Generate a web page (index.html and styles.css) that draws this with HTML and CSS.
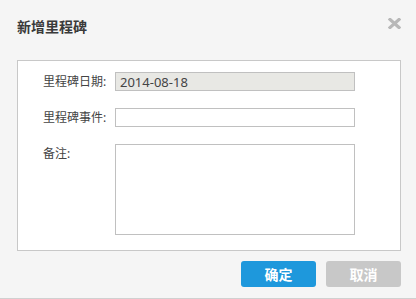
FILE: index.html
```html
<!DOCTYPE html>
<html lang="zh-CN">
<head>
    <meta charset="UTF-8">
    <meta name="viewport" content="width=device-width, initial-scale=1.0">
    <title>新增里程碑</title>
    <link rel="stylesheet" href="styles.css">
</head>
<body>
    <div class="dialog">
        <div class="dialog-header">
            <h2 class="dialog-title">新增里程碑</h2>
            <span class="dialog-close" title="关闭">
                <svg width="13" height="11" viewBox="0 0 13 11">
                    <path d="M2 1.5 L11 9.5 M11 1.5 L2 9.5" stroke="#b8b8b8" stroke-width="3.2" stroke-linecap="square"/>
                </svg>
            </span>
        </div>
        <div class="panel">
            <div class="form-row">
                <label class="form-label" for="msDate">里程碑日期:</label>
                <input class="form-input readonly" type="text" id="msDate" value="2014-08-18" readonly>
            </div>
            <div class="form-row">
                <label class="form-label" for="msEvent">里程碑事件:</label>
                <input class="form-input" type="text" id="msEvent">
            </div>
            <div class="form-row">
                <label class="form-label" for="msNote">备注:</label>
                <textarea class="form-textarea" id="msNote"></textarea>
            </div>
        </div>
        <div class="dialog-footer">
            <button class="btn btn-primary">确定</button>
            <button class="btn btn-cancel">取消</button>
        </div>
    </div>
</body>
</html>
```

FILE: styles.css
```css
body {
    margin: 0;
    font-family: "Noto Sans", "Noto Sans CJK SC", sans-serif;
    background-color: #f5f5f5;
}
.dialog {
    height: 298px;
    border-bottom: 1px solid #d0d0d0;
    padding: 0 15px 0 17px;
    box-sizing: content-box;
    width: 384px;
}
.dialog-header {
    display: flex;
    justify-content: space-between;
    align-items: center;
    height: 60px;
}
.dialog-title {
    margin: 0;
    font-size: 14px;
    font-weight: bold;
    color: #3a3a3a;
    line-height: 20px;
    padding-bottom: 7px;
}
.dialog-close {
    display: flex;
    padding-bottom: 14px;
    cursor: pointer;
}
.panel {
    background-color: #fff;
    border: 1px solid #c8c8c8;
    padding: 11px 0 15px 25px;
    display: flex;
    flex-direction: column;
    gap: 17px;
}
.form-row {
    display: flex;
    align-items: flex-start;
}
.form-label {
    width: 72px;
    font-size: 12px;
    color: #444;
    line-height: 19px;
    flex-shrink: 0;
}
.form-input {
    width: 240px;
    height: 19px;
    box-sizing: border-box;
    border: 1px solid #c0c0c0;
    padding: 0 4px;
    font-family: inherit;
    font-size: 13px;
    color: #444;
    margin: 0;
    outline: none;
}
.form-input.readonly {
    background-color: #e8e8e4;
}
.form-textarea {
    width: 240px;
    height: 91px;
    box-sizing: border-box;
    border: 1px solid #c0c0c0;
    margin: 0;
    resize: none;
    outline: none;
    font-family: inherit;
}
.dialog-footer {
    display: flex;
    justify-content: flex-end;
    gap: 10px;
    margin-top: 10px;
}
.btn {
    width: 75px;
    height: 26px;
    border: none;
    border-radius: 3px;
    color: #fff;
    font-family: inherit;
    font-size: 14px;
    font-weight: bold;
    cursor: pointer;
    padding: 0;
}
.btn-primary {
    background-color: #1e98dc;
}
.btn-cancel {
    background-color: #c8c8c8;
}
```
